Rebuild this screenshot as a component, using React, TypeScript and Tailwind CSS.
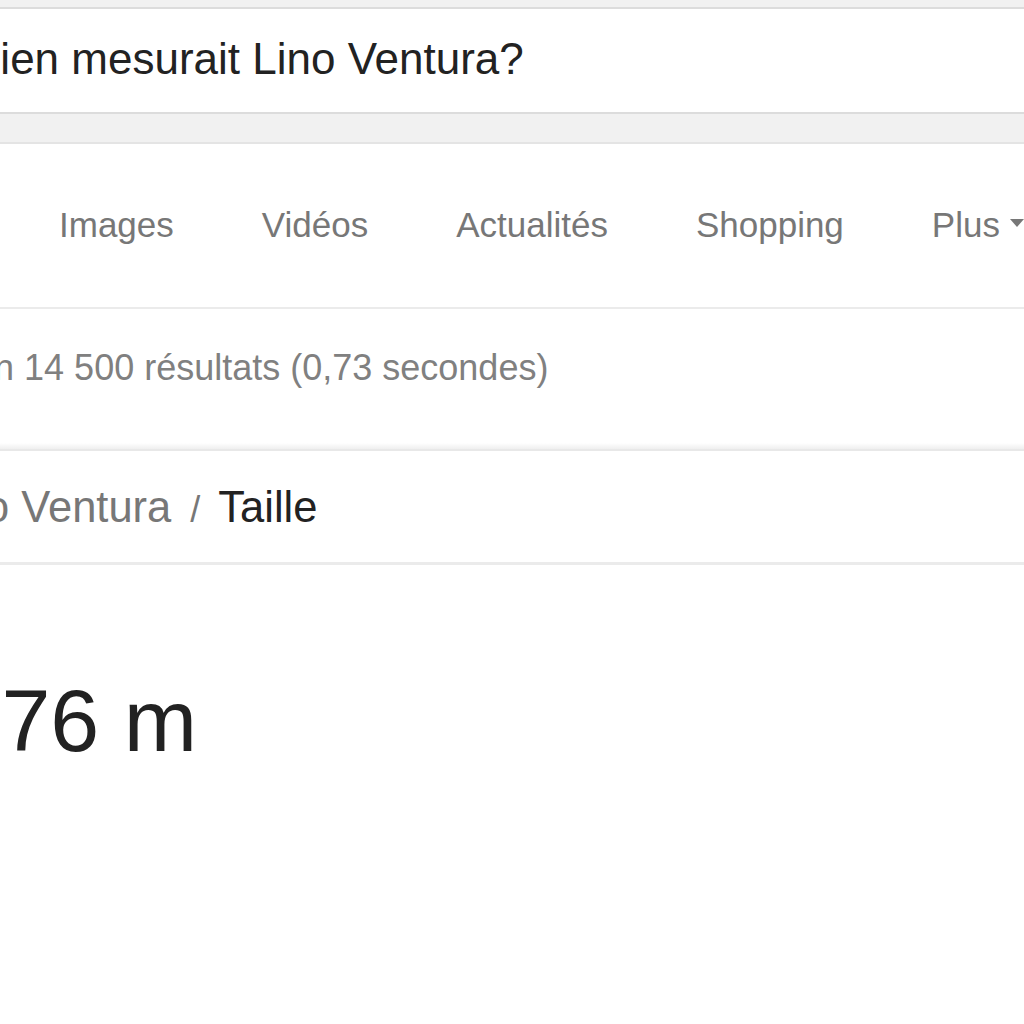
export default function App() {
  const tabs = ['Images', 'Vidéos', 'Actualités', 'Shopping'];

  return (
    <div className="w-[1024px] h-[1024px] overflow-hidden bg-white font-['Liberation_Sans',Arial,sans-serif]">
      {/* top strip + search box */}
      <div className="h-[7px] bg-[#f1f1f1]" />
      <div className="h-[107px] border-y-2 border-[#dcdcdc] bg-white pt-[28px] whitespace-nowrap">
        <div className="-ml-[117px] text-[44px] leading-none text-[#222]">
          Combien mesurait Lino Ventura?
        </div>
      </div>
      <div className="h-[28px] bg-[#f1f1f1]" />
      <div className="h-[2px] bg-[#e4e4e4]" />

      {/* tabs */}
      <div className="h-[163px] pt-[63px] pl-[59px] whitespace-nowrap">
        <div className="flex items-start gap-[88px] text-[35px] leading-none text-[#777]">
          {tabs.map((t) => (
            <span key={t}>{t}</span>
          ))}
          <span className="flex items-start">
            Plus
            <span className="ml-[10px] mt-[12px] w-0 h-0 border-x-[7px] border-x-transparent border-t-[8px] border-t-[#777]" />
          </span>
        </div>
      </div>
      <div className="h-[2px] bg-[#ebebeb]" />

      {/* result stats */}
      <div className="h-[134px] pt-[41px] whitespace-nowrap">
        <div className="-ml-[108px] text-[36px] leading-none text-[#808080]">
          Environ 14 500 résultats (0,73 secondes)
        </div>
      </div>
      <div className="h-[6px] bg-gradient-to-b from-white to-[#efefef]" />
      <div className="h-[2px] bg-[#e8e8e8]" />

      {/* breadcrumb */}
      <div className="h-[111px] pt-[35px] whitespace-nowrap">
        <div className="-ml-[73px] text-[43.5px] leading-none">
          <span className="text-[#777]">Lino Ventura</span>
          <span className="ml-[19px] mr-[18px] text-[#777] text-[36px]">/</span>
          <span className="text-[#222]">Taille</span>
        </div>
      </div>
      <div className="h-[3px] bg-[#ebebeb]" />

      {/* answer */}
      <div className="pt-[112px] whitespace-nowrap">
        <div className="-ml-[72px] text-[88px] leading-none text-[#222]">1,76 m</div>
      </div>
    </div>
  );
}
